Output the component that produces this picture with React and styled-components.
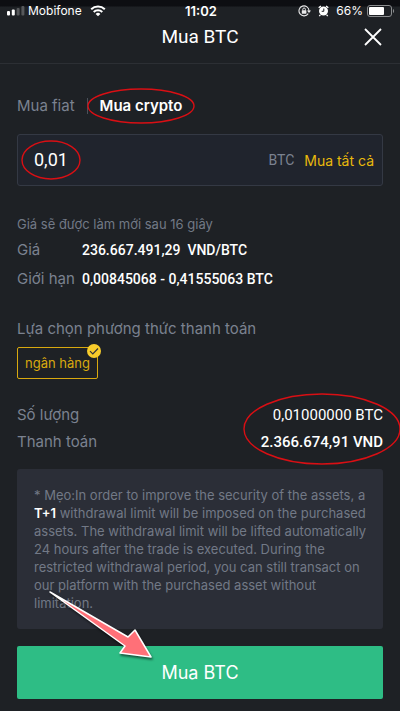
import { useState } from 'react';
import styled, { createGlobalStyle } from 'styled-components';

const NOTE_START = '* Mẹo:In order to improve the security of the assets, a';
const NOTE_END =
  'withdrawal limit will be imposed on the purchased assets. The withdrawal limit will be lifted automatically 24 hours after the trade is executed. During the restricted withdrawal period, you can still transact on our platform with the purchased asset without limitation.';

const StatusBar = () => (
  <Status>
    <StatusSide>
      <svg width="18" height="10" viewBox="0 0 18 10" aria-hidden="true">
        <rect x="0" y="5" width="3" height="4.5" rx="1" fill="#fff" />
        <rect x="4.8" y="3.5" width="3" height="6" rx="1" fill="#fff" />
        <rect x="9.6" y="2" width="3" height="7.5" rx="1" fill="#56585b" />
        <rect x="14.4" y="0" width="3" height="9.5" rx="1" fill="#56585b" />
      </svg>
      <span>Mobifone</span>
      <WifiIcon width="16" height="12" viewBox="0 0 16 12" aria-hidden="true">
        <path d="M1.2 4.3a9.8 9.8 0 0 1 13.6 0" />
        <path d="M3.7 6.9a6.3 6.3 0 0 1 8.6 0" />
        <path d="M8 11.3 5.6 8.9a3.5 3.5 0 0 1 4.8 0z" fill="#fff" stroke="none" />
      </WifiIcon>
    </StatusSide>
    <Clock>11:02</Clock>
    <StatusSide $end>
      <svg width="13" height="12" viewBox="0 0 13 12" aria-hidden="true">
        <path d="M10.2 8.6A5 5 0 1 1 11 6" fill="none" stroke="#e8e8e9" strokeWidth="1.1" />
        <path d="M9 5.4h4L11 8z" fill="#e8e8e9" />
        <rect x="3.8" y="5.3" width="4.6" height="3.4" rx="0.5" fill="#e8e8e9" />
        <path d="M4.8 5.5V4.3a1.3 1.3 0 0 1 2.6 0v1.2" fill="none" stroke="#e8e8e9" />
      </svg>
      <AlarmIcon width="11" height="12" viewBox="0 0 11 12" aria-hidden="true">
        <circle cx="5.5" cy="6" r="4.5" fill="#fff" />
        <path d="M.7 2.8 2.9 1M10.3 2.8 8.1 1M2.3 10l-1 1.2M8.7 10l1 1.2" stroke="#fff" strokeWidth="1.3" />
        <path d="M5.8 3.5v2.8H3.7" fill="none" stroke="#1e2125" strokeWidth="1" />
      </AlarmIcon>
      <span>66%</span>
      <svg width="28" height="12" viewBox="0 0 28 12" aria-hidden="true">
        <rect x=".5" y=".5" width="24" height="11" rx="2.5" fill="none" stroke="#8b8d8f" />
        <rect x="2" y="2" width="15" height="8" rx="1" fill="#fff" />
        <path d="M26 4v4c1.5-.7 1.5-3.3 0-4z" fill="#8b8d8f" />
      </svg>
    </StatusSide>
  </Status>
);

const Ring = ({ width, height }) => (
  <RingSvg width={width} height={height} aria-hidden="true">
    <ellipse cx={width / 2} cy={height / 2} rx={width / 2 - 1} ry={height / 2 - 1} />
  </RingSvg>
);

const App = () => {
  const [tab, setTab] = useState('crypto');
  const [amount, setAmount] = useState('0,01');
  const [bank, setBank] = useState(true);

  return (
    <Page>
      <GlobalStyle />
      <StatusBar />
      <Header>
        <Title>Mua BTC</Title>
        <CloseButton aria-label="Close">
          <svg width="18" height="18" viewBox="0 0 18 18" aria-hidden="true">
            <path d="M1 1l16 16M17 1 1 17" stroke="#fff" strokeWidth="1.8" />
          </svg>
        </CloseButton>
      </Header>

      <Content>
        <Tabs>
          <Tab $active={tab === 'fiat'} onClick={() => setTab('fiat')}>Mua fiat</Tab>
          <Separator />
          <Marked>
            <Tab $active={tab === 'crypto'} onClick={() => setTab('crypto')}>Mua crypto</Tab>
            <Ring width={108} height={36} />
          </Marked>
        </Tabs>

        <AmountBox>
          <AmountMark>
            <AmountInput
              aria-label="Số lượng BTC"
              value={amount}
              onChange={(e) => setAmount(e.target.value)}
            />
            <Ring width={60} height={40} />
          </AmountMark>
          <Unit>BTC</Unit>
          <BuyAll>Mua tất cả</BuyAll>
        </AmountBox>

        <Refresh>Giá sẽ được làm mới sau 16 giây</Refresh>
        <Info>
          <dt>Giá</dt>
          <dd>236.667.491,29&nbsp; VND/BTC</dd>
          <dt>Giới hạn</dt>
          <dd>0,00845068 - 0,41555063 BTC</dd>
        </Info>

        <MethodTitle>Lựa chọn phương thức thanh toán</MethodTitle>
        <Method aria-pressed={bank} onClick={() => setBank((prev) => !prev)}>
          ngân hàng
          {bank && (
            <Check width="14" height="14" viewBox="0 0 14 14" aria-hidden="true">
              <circle cx="7" cy="7" r="7" fill="#f8cc2b" />
              <path d="M3 7.2 5.8 10 11 4.5" fill="none" stroke="#33343a" strokeWidth="1.2" />
            </Check>
          )}
        </Method>

        <Summary>
          <Labels>
            <span>Số lượng</span>
            <span>Thanh toán</span>
          </Labels>
          <Totals>
            <span>0,01000000 BTC</span>
            <strong>2.366.674,91 VND</strong>
            <Ring width={158} height={72} />
          </Totals>
        </Summary>

        <Note>
          {NOTE_START} <b>T+1</b> {NOTE_END}
        </Note>

        <Submit>
          Mua BTC
          <Arrow width="112" height="76" viewBox="0 0 112 76" aria-hidden="true">
            <path d="M5 6 83 51 90 44 106 71 75 67 80 60z" />
          </Arrow>
        </Submit>
      </Content>
    </Page>
  );
};

export default App;

const GlobalStyle = createGlobalStyle`
  *{
    box-sizing: border-box;
  }
  body{
    margin: 0;
    background: #1e2125;
  }
  button, input{
    font: inherit;
    color: inherit;
    background: none;
    border: 0;
    padding: 0;
  }
  button{
    cursor: pointer;
  }
`;

const Page = styled.div`
  min-height: 100vh;
  background: #1e2125;
  color: #fff;
  font-family: Inter, 'Noto Sans', sans-serif;
`;

const Status = styled.div`
  display: grid;
  grid-template-columns: 1fr auto 1fr;
  align-items: center;
  height: 22px;
  padding: 0 5px 0 7px;
  background: linear-gradient(#0d0e12 6px, #1e2125 7px);
  font-size: 12px;
  line-height: 16px;
`;

const StatusSide = styled.div`
  display: flex;
  align-items: center;
  justify-content: ${({ $end }) => ($end ? 'flex-end' : 'flex-start')};
  gap: ${({ $end }) => ($end ? '4px' : '3px')};
`;

const WifiIcon = styled.svg`
  margin-left: 5px;
  fill: none;
  stroke: #fff;
  stroke-width: 2;
`;

const AlarmIcon = styled.svg`
  margin: 0 3px;
`;

const Clock = styled.span`
  font-size: 13px;
  font-weight: 600;
`;

const Header = styled.header`
  display: grid;
  grid-template-columns: 1fr auto 1fr;
  align-items: center;
  height: 42px;
  padding: 0 18px 12px;
  border-bottom: 1px solid #2c2f34;
`;

const Title = styled.h1`
  grid-column: 2;
  margin: 0;
  font-family: Roboto, sans-serif;
  font-size: 19px;
  line-height: 24px;
  font-weight: 400;
`;

const CloseButton = styled.button`
  display: flex;
  justify-self: end;
`;

const Content = styled.main`
  padding: 32px 17px 12px;
`;

const Tabs = styled.div`
  display: flex;
  align-items: center;
  font-size: 15px;
  line-height: 20px;
`;

const Tab = styled.button`
  color: ${({ $active }) => ($active ? '#fff' : '#7b8290')};
  font-weight: ${({ $active }) => ($active ? 600 : 400)};
`;

const Separator = styled.span`
  width: 1px;
  height: 16px;
  margin: 0 12px;
  background: #4a505a;
`;

const Marked = styled.div`
  position: relative;
`;

const RingSvg = styled.svg`
  position: absolute;
  top: 50%;
  left: 50%;
  transform: translate(-50%, -50%);
  overflow: visible;
  fill: none;
  stroke: #d90f14;
  stroke-width: 1.4;
  pointer-events: none;
`;

const AmountBox = styled.div`
  display: flex;
  align-items: center;
  height: 52px;
  margin-top: 18px;
  padding: 0 8px 0 16px;
  border: 1px solid #343944;
  border-radius: 3px;
  background: #20242d;
`;

const AmountMark = styled.div`
  position: relative;
  margin-right: auto;
`;

const AmountInput = styled.input`
  display: block;
  width: 34px;
  font-family: Roboto, sans-serif;
  font-size: 18px;
  line-height: 24px;
  outline: none;
`;

const Unit = styled.span`
  margin-right: 10px;
  color: #7b8290;
  font-family: Roboto, sans-serif;
  font-size: 14px;
`;

const BuyAll = styled.button`
  color: #e9b90c;
  font-size: 14px;
`;

const Refresh = styled.p`
  margin: 30px 0 0;
  color: #727986;
  font-size: 13px;
  line-height: 16px;
`;

const Info = styled.dl`
  display: grid;
  grid-template-columns: 65px 1fr;
  row-gap: 9px;
  margin: 8px 0 0;
  font-size: 14px;
  line-height: 20px;
  dt{
    color: #7b8290;
    font-size: 15px;
    white-space: nowrap;
  }
  dd{
    margin: 0;
    font-family: Roboto, sans-serif;
    font-weight: 500;
  }
`;

const MethodTitle = styled.h2`
  margin: 30px 0 8px;
  color: #7b8290;
  font-size: 15px;
  line-height: 20px;
  font-weight: 400;
`;

const Method = styled.button`
  position: relative;
  display: block;
  padding: 7px;
  border: 1px solid #d9a90f;
  border-radius: 2px;
  color: #d9a90f;
  font-size: 13px;
  line-height: 16px;
`;

const Check = styled.svg`
  position: absolute;
  top: -4px;
  right: -4px;
`;

const Summary = styled.div`
  display: flex;
  justify-content: space-between;
  margin-top: 26px;
  font-size: 15px;
  line-height: 20px;
`;

const Labels = styled.div`
  display: flex;
  flex-direction: column;
  gap: 7px;
  color: #7b8290;
`;

const Totals = styled.div`
  position: relative;
  display: flex;
  flex-direction: column;
  align-items: flex-end;
  gap: 7px;
  font-family: Roboto, sans-serif;
  strong{
    font-weight: 500;
  }
`;

const Note = styled.p`
  margin: 17px 0 0;
  padding: 17px 12px 17px 17px;
  border-radius: 3px;
  background: #2b2e37;
  color: #727986;
  font-size: 13px;
  line-height: 18px;
  b{
    color: #fff;
    font-weight: 600;
  }
`;

const Submit = styled.button`
  position: relative;
  width: 100%;
  height: 53px;
  margin-top: 17px;
  border-radius: 2px;
  background: #2ebd85;
  color: #fff;
  font-size: 18px;
`;

const Arrow = styled.svg`
  position: absolute;
  left: 28px;
  bottom: 37px;
  fill: #ff7078;
  stroke: #fff;
  stroke-width: 1.5;
  stroke-linejoin: round;
  filter: drop-shadow(1px 2px 1px #0008);
  pointer-events: none;
`;
